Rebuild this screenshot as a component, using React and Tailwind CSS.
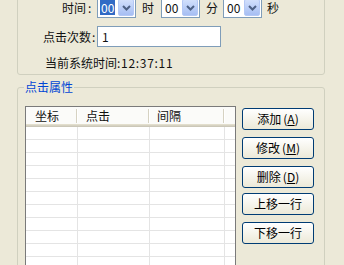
import React from "react"

function Combo({ value, selected }) {
  return (
    <div className="flex h-[21px] w-[39px] border border-[#7f9db9] bg-white">
      <div className="flex flex-1 items-center pl-[2px]">
        <span
          className={
            selected
              ? "bg-[#316ac5] px-[1px] leading-[15px] text-white"
              : "px-[1px] leading-[15px]"
          }
        >
          {value}
        </span>
      </div>
      <div className="m-[1px] flex w-[16px] items-center justify-center rounded-[2px] border border-[#b4c8f5] bg-gradient-to-b from-[#d2e0fc] to-[#a6bef3]">
        <svg width="9" height="6" viewBox="0 0 9 6">
          <path d="M1 1 L4.5 4.5 L8 1" stroke="#4d6185" strokeWidth="2" fill="none" />
        </svg>
      </div>
    </div>
  )
}

function XpButton({ label, hotkey, className }) {
  return (
    <button
      className={
        "flex h-[22px] w-[72px] items-center justify-center rounded-[3px] border border-[#003c74] bg-gradient-to-b from-white to-[#ece9d8] text-[12px] leading-none text-black " +
        (className || "")
      }
    >
      {label}
      {hotkey && (
        <span className="ml-[2px]">
          (<u>{hotkey}</u>)
        </span>
      )}
    </button>
  )
}

const rows = Array.from({ length: 11 })

function App() {
  return (
    <div className="relative h-[265px] w-[344px] overflow-hidden bg-[#ece9d8] font-['Noto_Sans_CJK_SC',sans-serif] text-[12px] text-[#111]">
      {/* 定时设置 */}
      <div className="ml-[17px] mt-[-6px] h-[81px] w-[308px] rounded-[3px] border border-[#d0d0bf]">
        <div className="mt-[2px] flex items-center pl-[44px]">
          <span className="w-[35px]">时间<span className="ml-[2px]">:</span></span>
          <Combo value="00" selected />
          <span className="ml-[6px] w-[19px]">时</span>
          <Combo value="00" />
          <span className="ml-[6px] w-[17px]">分</span>
          <Combo value="00" />
          <span className="ml-[5px]">秒</span>
        </div>
        <div className="mt-[8px] flex items-center pl-[25px]">
          <span className="w-[54px]">点击次数<span className="ml-[1px]">:</span></span>
          <div className="flex h-[21px] w-[124px] items-center border border-[#7f9db9] bg-white pl-[4px]">
            1
          </div>
        </div>
        <div className="mt-[9px] pl-[27px] leading-[14px]">
          当前系统时间<span className="tracking-[0.7px]">:12:37:11</span>
        </div>
      </div>

      {/* 点击属性 */}
      <fieldset className="ml-[17px] mt-[5px] h-[200px] w-[308px] rounded-[3px] border border-[#d0d0bf]">
        <legend className="ml-[6px] px-[1px] leading-[14px] text-[#0046d5]">点击属性</legend>
        <div className="mt-[12px] flex pl-[7px]">
          <div className="h-[175px] w-[211px] border border-[#7a7a7a] bg-white">
            <div className="flex h-[17px] bg-[#fbfbf9]">
              <div className="flex w-[52px] items-center">
                <span className="flex-1 pl-[9px]">坐标</span>
                <span className="h-[14px] w-[2px] border-r border-white bg-[#d6d2c2]" />
              </div>
              <div className="flex w-[72px] items-center">
                <span className="flex-1 pl-[8px]">点击</span>
                <span className="h-[14px] w-[2px] border-r border-white bg-[#d6d2c2]" />
              </div>
              <div className="flex w-[75px] items-center">
                <span className="flex-1 pl-[7px]">间隔</span>
                <span className="h-[14px] w-[2px] border-r border-white bg-[#d6d2c2]" />
              </div>
            </div>
            <div className="h-[1px] bg-[#e2decd]" />
            <div className="h-[1px] bg-[#d6d2c2]" />
            <div className="h-[1px] bg-[#cbc7b8]" />
            {rows.map((_, i) => (
              <div key={i} className="flex h-[13px] border-b border-[#e4e4e4]">
                <div className="w-[52px] border-r border-[#e4e4e4]" />
                <div className="w-[72px] border-r border-[#e4e4e4]" />
                <div className="w-[75px] border-r border-[#e4e4e4]" />
              </div>
            ))}
          </div>
          <div className="ml-[6px] mt-[2px] flex flex-col">
            <XpButton label="添加" hotkey="A" />
            <XpButton label="修改" hotkey="M" className="mt-[7px]" />
            <XpButton label="删除" hotkey="D" className="mt-[7px]" />
            <XpButton label="上移一行" className="mt-[5px]" />
            <XpButton label="下移一行" className="mt-[7px]" />
          </div>
        </div>
      </fieldset>
    </div>
  )
}

export default App
